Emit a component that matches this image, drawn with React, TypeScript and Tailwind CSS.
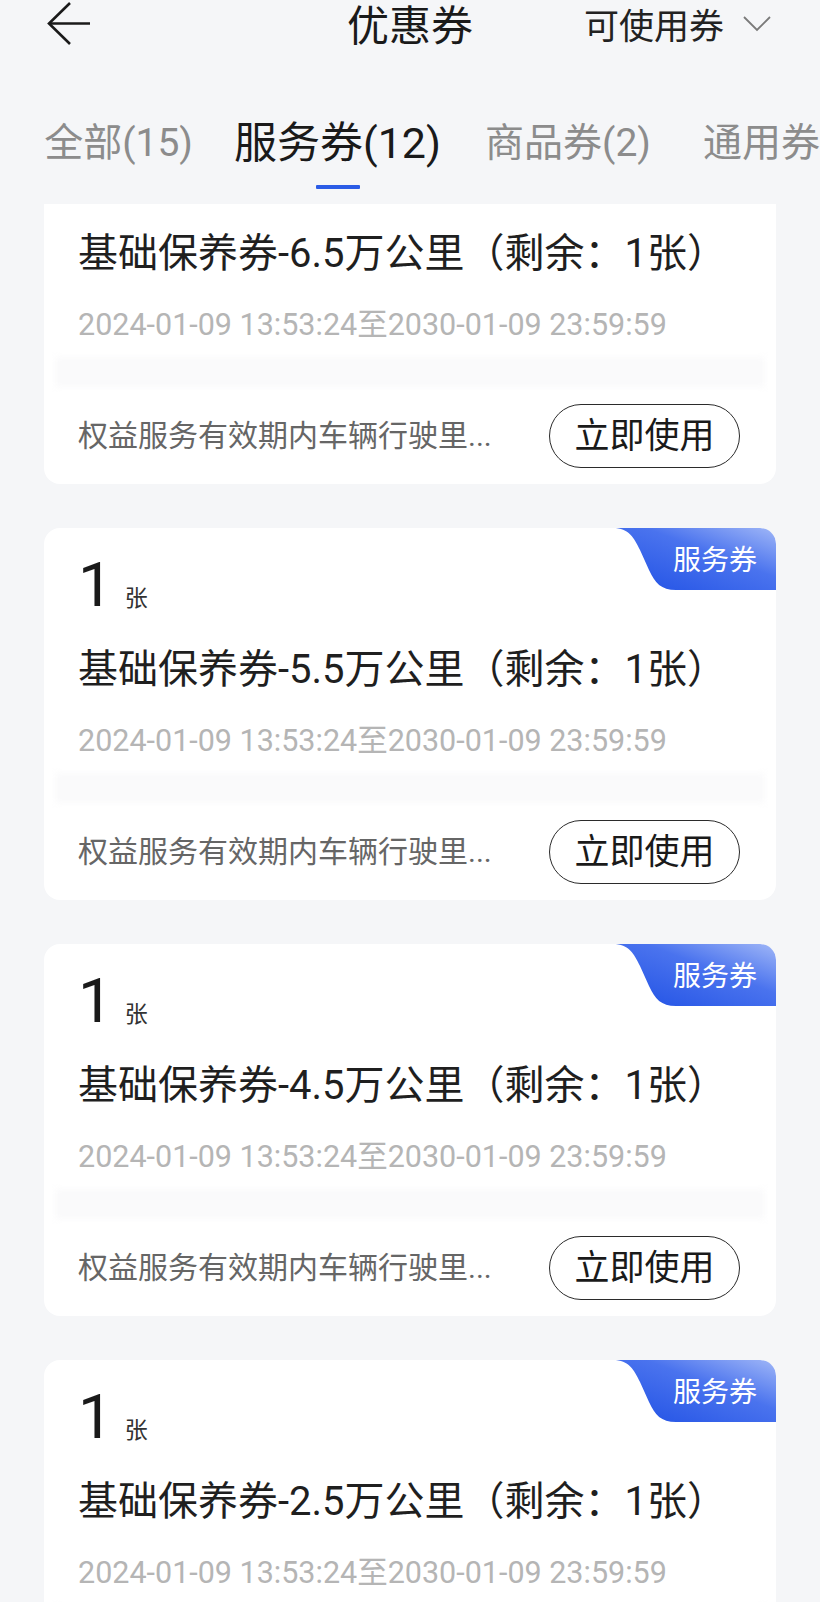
import React from "react";

type Coupon = { km: string };

const coupons: Coupon[] = [{ km: "6.5" }, { km: "5.5" }, { km: "4.5" }, { km: "2.5" }];

function Badge({ id }: { id: string }) {
  return (
    <div className="absolute top-0 right-0 w-[163px] h-[62px]">
      <svg width="163" height="62" viewBox="0 0 163 62" className="absolute inset-0">
        <defs>
          <linearGradient id={id} x1="0" y1="1" x2="1" y2="0">
            <stop offset="0" stopColor="#1e4fe4" />
            <stop offset="0.6" stopColor="#4a73ee" />
            <stop offset="1" stopColor="#9fb6f7" />
          </linearGradient>
        </defs>
        <path
          d="M0,0 C16,0 21,10 27,22 L36,42 C42,55 48,62 63,62 H163 V16 Q163,0 147,0 Z"
          fill={`url(#${id})`}
        />
      </svg>
      <div className="relative h-full flex items-center justify-end pr-[19px] pt-[4px] text-[28px] leading-none text-white">
        服务券
      </div>
    </div>
  );
}

function Card({ c, idx }: { c: Coupon; idx: number }) {
  return (
    <div className="relative shrink-0 h-[372px] bg-white rounded-[16px] px-[34px] flex flex-col overflow-hidden">
      <Badge id={`badge-grad-${idx}`} />
      <div className="h-[88px] pt-[26px] flex items-baseline">
        <span className="text-[62px] leading-none text-[#1a1a1a]">1</span>
        <span className="ml-[12px] text-[23px] leading-none text-[#333333]">张</span>
      </div>
      <div className="mt-[34px] h-[40px] text-[40px] leading-none text-[#1f1f1f] whitespace-nowrap">
        基础保养券-{c.km}万公里（剩余：1张）
      </div>
      <div className="mt-[36px] h-[30px] text-[30.5px] leading-none text-[#b5b5b5] whitespace-nowrap">
        2024-01-09 13:53:24至2030-01-09 23:59:59
      </div>
      <div className="mt-[17px] h-[30px] -mx-[23px] bg-[#fafafb] blur-[3px]" />
      <div className="mt-[17px] h-[64px] flex items-center justify-between pr-[2px]">
        <span className="text-[30px] leading-none text-[#666666] whitespace-nowrap">
          权益服务有效期内车辆行驶里...
        </span>
        <button className="w-[191px] h-[64px] rounded-full border-[1.5px] border-[#2b2b2b] flex items-center justify-center text-[35px] leading-none text-[#1a1a1a] bg-white">
          立即使用
        </button>
      </div>
    </div>
  );
}

export default function App() {
  return (
    <div className="w-[820px] h-[1602px] overflow-hidden bg-[#f5f6f8] flex flex-col font-['Roboto','Noto_Sans_CJK_SC',sans-serif]">
      <header className="shrink-0 h-[54px] grid grid-cols-[1fr_auto_1fr] items-center">
        <div className="pl-[46px] flex items-center">
          <svg width="46" height="54" viewBox="0 0 46 54" fill="none">
            <path d="M24 3 L3 23.5 L24 44" stroke="#1a1a1a" strokeWidth="2.6" />
            <path d="M3 23.5 H44" stroke="#1a1a1a" strokeWidth="2.6" />
          </svg>
        </div>
        <div className="text-[42px] leading-none text-[#1a1a1a]">优惠券</div>
        <div className="flex items-center justify-end pr-[49px]">
          <span className="text-[35px] leading-none text-[#222222]">可使用券</span>
          <svg width="28" height="16" viewBox="0 0 28 16" fill="none" className="ml-[19px] mb-[7px]">
            <path d="M1 1 L14 14 L27 1" stroke="#7a7a7a" strokeWidth="1.8" />
          </svg>
        </div>
      </header>

      <nav className="shrink-0 h-[150px] pt-[65px] pl-[46px] flex items-start whitespace-nowrap overflow-hidden">
        <div className="shrink-0 w-[145px] mr-[45px] flex flex-col items-center">
          <span className="h-[48px] leading-[48px] text-[39px] text-[#8c8c8c]">全部(15)</span>
        </div>
        <div className="shrink-0 w-[203px] mr-[48px] flex flex-col items-center">
          <span className="h-[48px] leading-[48px] text-[43px] text-[#1a1a1a]">服务券(12)</span>
          <span className="mt-[18px] w-[44px] h-[4px] rounded-[1px] bg-[#2b5ce6]" />
        </div>
        <div className="shrink-0 w-[162px] mr-[54px] flex flex-col items-center">
          <span className="h-[48px] leading-[48px] text-[39px] text-[#8c8c8c]">商品券(2)</span>
        </div>
        <div className="shrink-0 flex flex-col items-start">
          <span className="h-[48px] leading-[48px] text-[39px] text-[#8c8c8c]">通用券(1)</span>
        </div>
      </nav>

      <main className="flex-1 overflow-hidden">
        <div className="-mt-[92px] mx-[44px] flex flex-col gap-[44px]">
          {coupons.map((c, i) => (
            <Card key={i} c={c} idx={i} />
          ))}
        </div>
      </main>
    </div>
  );
}
